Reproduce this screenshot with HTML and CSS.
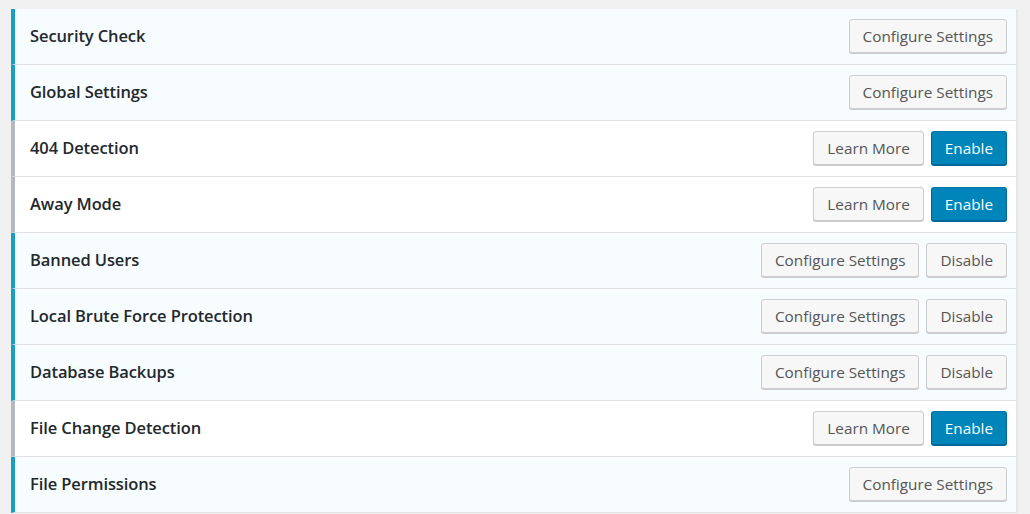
FILE: index.html
```html
<!DOCTYPE html>
<html>
<head>
<meta charset="utf-8">
<link rel="stylesheet" href="styles.css">
</head>
<body>
<div class="modules">
  <div class="module active"><h3 class="title">Security Check</h3><div class="actions"><button class="btn">Configure Settings</button></div></div>
  <div class="module active"><h3 class="title">Global Settings</h3><div class="actions"><button class="btn">Configure Settings</button></div></div>
  <div class="module inactive"><h3 class="title">404 Detection</h3><div class="actions"><button class="btn">Learn More</button><button class="btn primary">Enable</button></div></div>
  <div class="module inactive"><h3 class="title">Away Mode</h3><div class="actions"><button class="btn">Learn More</button><button class="btn primary">Enable</button></div></div>
  <div class="module active"><h3 class="title">Banned Users</h3><div class="actions"><button class="btn">Configure Settings</button><button class="btn">Disable</button></div></div>
  <div class="module active"><h3 class="title">Local Brute Force Protection</h3><div class="actions"><button class="btn">Configure Settings</button><button class="btn">Disable</button></div></div>
  <div class="module active"><h3 class="title">Database Backups</h3><div class="actions"><button class="btn">Configure Settings</button><button class="btn">Disable</button></div></div>
  <div class="module inactive"><h3 class="title">File Change Detection</h3><div class="actions"><button class="btn">Learn More</button><button class="btn primary">Enable</button></div></div>
  <div class="module active"><h3 class="title">File Permissions</h3><div class="actions"><button class="btn">Configure Settings</button></div></div>
</div>
</body>
</html>
```
FILE: styles.css
```css
html, body {
  margin: 0;
  padding: 0;
  background: #f1f1f1;
  overflow: hidden;
}
body {
  padding: 9px 13px 0 11px;
  font-family: "Open Sans", "Noto Sans", sans-serif;
  color: #23282d;
}
.modules {
  background: #fff;
  border-right: 1px solid #e5e5e5;
  box-shadow: 1px 0 1px rgba(0,0,0,0.04);
}
.module {
  display: flex;
  align-items: center;
  justify-content: space-between;
  height: 55px;
  border-bottom: 1px solid #e1e1e1;
  border-left: 4px solid #b4b9be;
  padding: 0 9px 0 15px;
  background: #fff;
}
.module.active {
  background: #f7fcfe;
  border-left-color: #1b9ec0;
}
.title {
  margin: -3px 0 0;
  font-size: 16.5px;
  font-weight: 600;
  color: #23282d;
  letter-spacing: -0.1px;
}
.actions {
  display: flex;
  gap: 7px;
  margin-top: -1px;
}
.btn {
  font-family: "Open Sans", "Noto Sans", sans-serif;
  font-size: 15.3px;
  height: 34px;
  padding: 0 13px 1px;
  background: #f7f7f7;
  border: 1px solid #ccc;
  border-radius: 3px;
  box-shadow: 0 1px 0 #ccc;
  color: #555;
  cursor: pointer;
  white-space: nowrap;
}
.btn.primary {
  background: #0085ba;
  border-color: #0073aa #006799 #006799;
  box-shadow: 0 1px 0 #006799;
  color: #fff;
}
```
